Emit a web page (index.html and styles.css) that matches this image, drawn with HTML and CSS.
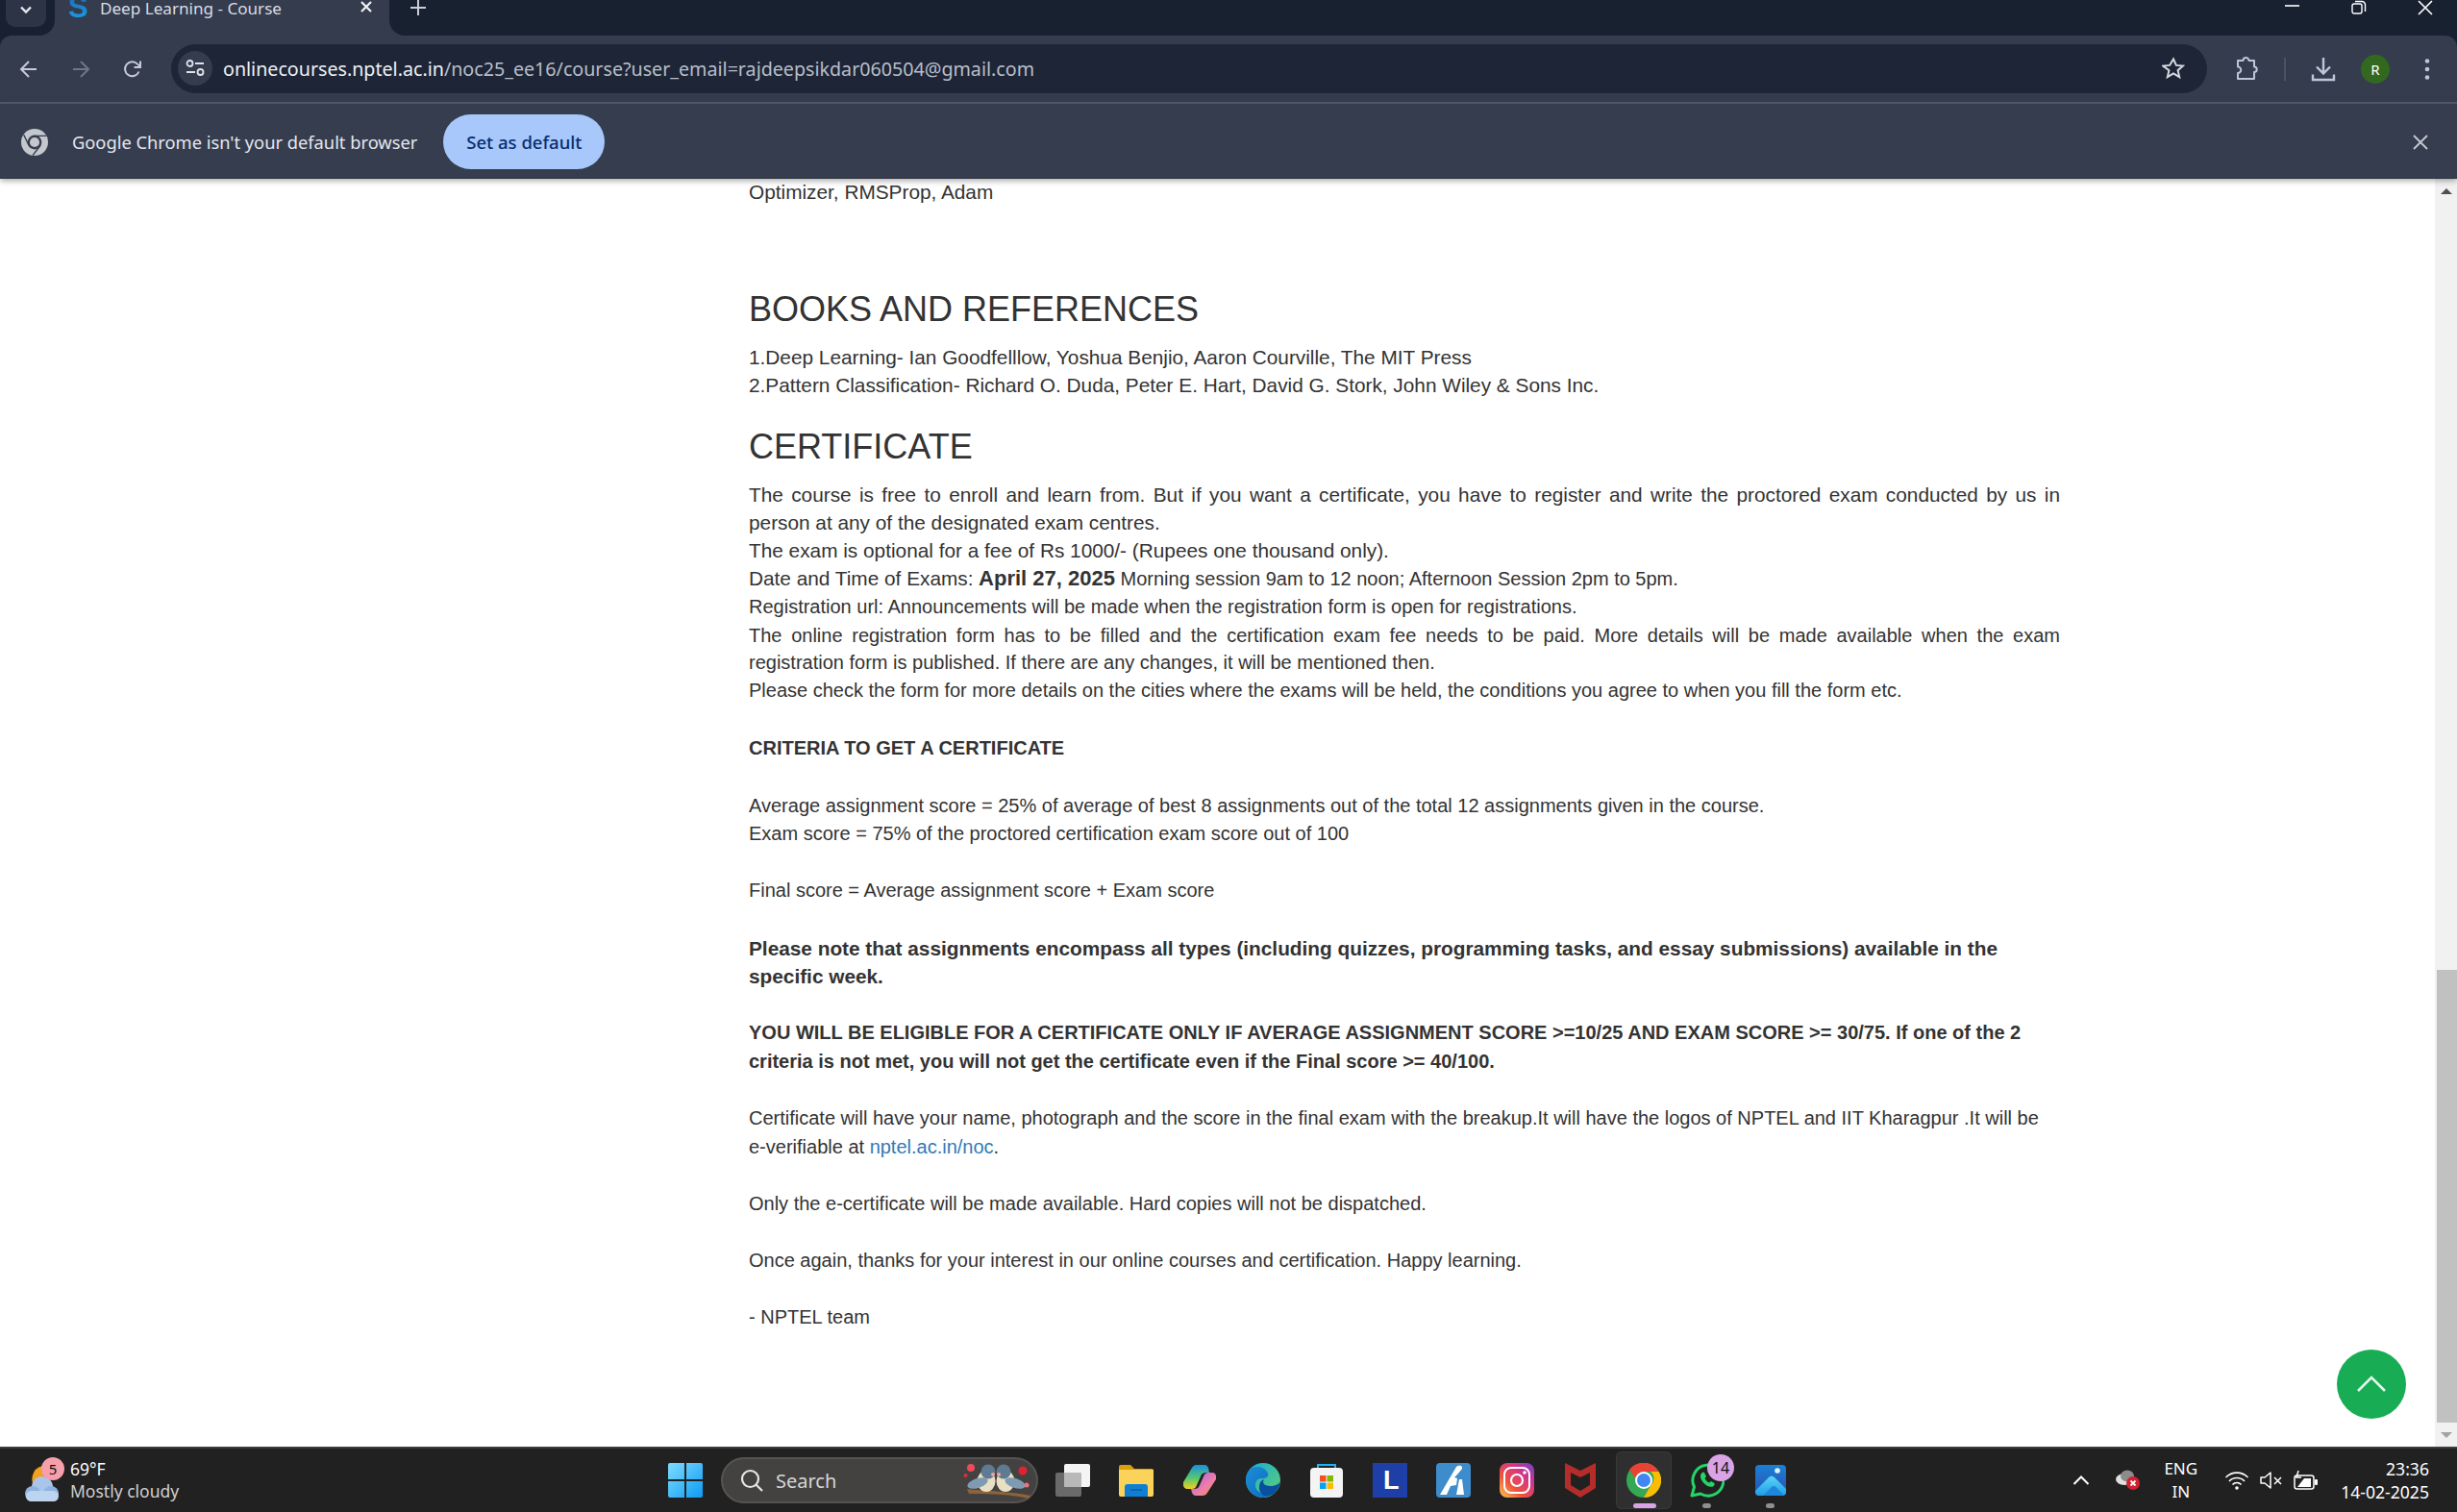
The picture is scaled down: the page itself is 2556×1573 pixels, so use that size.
FILE: index.html
```html
<!DOCTYPE html>
<html lang="en">
<head>
    <meta charset="UTF-8">
    <meta name="viewport" content="width=device-width, initial-scale=1.0">
    <title>Deep Learning - Course</title>
    <link rel="stylesheet" href="styles.css">
</head>
<body>
<div class="shell">

    <!-- tab strip -->
    <div class="tabstrip">
        <div class="strip-left">
            <div class="tab-search">
                <svg width="16" height="10" viewBox="0 0 16 10"><path d="M3 1.500l5 5 5-5" fill="none" stroke="#e6e9ef" stroke-width="2.400"/></svg>
            </div>
        </div>
        <div class="tab">
            <svg class="favicon" width="20" height="26" viewBox="0 0 20 26">
                <defs><linearGradient id="favS" x1="0" y1="0" x2="0" y2="1"><stop offset="0" stop-color="#1b5fb5"/><stop offset="1" stop-color="#19a7e8"/></linearGradient></defs>
                <text x="-1" y="20" font-family="Liberation Sans" font-weight="700" font-size="31" fill="url(#favS)">S</text>
            </svg>
            <span class="tab-title">Deep Learning - Course</span>
            <svg class="tab-close" width="14" height="14" viewBox="0 0 14 14"><path d="M2 2l10 10M12 2L2 12" stroke="#f0f2f5" stroke-width="2.200"/></svg>
        </div>
        <div class="strip-right">
            <svg class="new-tab" width="16" height="16" viewBox="0 0 16 16"><path d="M8 0v16M0 8h16" stroke="#c9ced8" stroke-width="2"/></svg>
            <div class="window-controls">
                <svg width="16" height="12" viewBox="0 0 16 12"><path d="M0 6h15" stroke="#fff" stroke-width="1.600"/></svg>
                <svg width="16" height="16" viewBox="0 0 16 16"><rect x="1" y="4" width="10" height="10" rx="2" fill="none" stroke="#fff" stroke-width="1.400"/><path d="M4 1.500h7a3.500 3.500 0 0 1 3.500 3.500v7" fill="none" stroke="#fff" stroke-width="1.400"/></svg>
                <svg width="16" height="16" viewBox="0 0 16 16"><path d="M1 1l14 14M15 1L1 15" stroke="#fff" stroke-width="1.600"/></svg>
            </div>
        </div>
    </div>

    <!-- toolbar -->
    <div class="toolbar">
        <div class="nav-slot">
            <svg width="20" height="20" viewBox="0 0 20 20"><path d="M18 10H3M10 2l-8 8 8 8" fill="none" stroke="#c5cad6" stroke-width="2"/></svg>
        </div>
        <div class="nav-slot">
            <svg width="20" height="20" viewBox="0 0 20 20"><path d="M2 10h15M10 2l8 8-8 8" fill="none" stroke="#6f7686" stroke-width="2"/></svg>
        </div>
        <div class="nav-slot">
            <svg width="20" height="20" viewBox="0 0 20 20"><path d="M16.500 12.500A7.500 7.500 0 1 1 15 4.600L17.500 7" fill="none" stroke="#c5cad6" stroke-width="2"/><path d="M18 1.500V8h-6.500" fill="none" stroke="#c5cad6" stroke-width="2"/></svg>
        </div>
        <div class="omnibox">
            <div class="site-chip">
                <svg width="20" height="18" viewBox="0 0 20 18"><circle cx="4.500" cy="4" r="3" fill="none" stroke="#dfe3ea" stroke-width="1.800"/><path d="M10 4h9M1 13h9" stroke="#dfe3ea" stroke-width="1.800"/><circle cx="15.500" cy="13" r="3" fill="none" stroke="#dfe3ea" stroke-width="1.800"/></svg>
            </div>
            <div class="url"><span class="url-host">onlinecourses.nptel.ac.in</span>/noc25_ee16/course?user_email=rajdeepsikdar060504@gmail.com</div>
            <svg class="star" width="24" height="24" viewBox="0 0 24 24"><path d="M12 2.500l2.900 6.400 7 .7-5.300 4.600 1.600 6.900-6.200-3.600-6.200 3.600 1.600-6.900L1.100 9.600l7-.7z" fill="none" stroke="#d5d9e2" stroke-width="2"/></svg>
        </div>
        <div class="tool-slot tool-first">
            <svg width="26" height="26" viewBox="0 0 26 26"><path d="M4 4h5.500a3 3 0 0 1 6 0H21v6.500a2.700 2.700 0 0 1 0 5.500v7H4v-6a3.200 3.200 0 0 0 0-6.500z" fill="none" stroke="#bcc6da" stroke-width="2" stroke-linejoin="round"/></svg>
        </div>
        <div class="tool-divider"></div>
        <div class="tool-slot">
            <svg width="26" height="26" viewBox="0 0 26 26"><path d="M13 1v16M6 10.500l7 7 7-7" fill="none" stroke="#bcc6da" stroke-width="2.400"/><path d="M2 18.500V24h22v-5.500" fill="none" stroke="#bcc6da" stroke-width="2.400"/></svg>
        </div>
        <div class="tool-slot">
            <div class="avatar">R</div>
        </div>
        <div class="tool-slot">
            <svg width="6" height="24" viewBox="0 0 6 24"><circle cx="3" cy="3.500" r="2.300" fill="#bcc6da"/><circle cx="3" cy="12" r="2.300" fill="#bcc6da"/><circle cx="3" cy="20.500" r="2.300" fill="#bcc6da"/></svg>
        </div>
    </div>

    <!-- default browser bar -->
    <div class="infobar">
        <svg width="28" height="28" viewBox="0 0 36 36">
            <circle cx="18" cy="18" r="18" fill="#c4c7cd"/>
            <path d="M18 9.500h15.600M10.500 22.500L3.500 8M25.500 22.500L15.500 35.500" stroke="#353d4f" stroke-width="1.800"/>
            <circle cx="18" cy="18" r="9.500" fill="#353d4f"/>
            <circle cx="18" cy="18" r="6.500" fill="#c4c7cd"/>
        </svg>
        <span class="infobar-text">Google Chrome isn't your default browser</span>
        <button class="set-default">Set as default</button>
        <svg class="infobar-close" width="16" height="16" viewBox="0 0 16 16"><path d="M1 1l14 14M15 1L1 15" stroke="#c5c9d2" stroke-width="1.800"/></svg>
    </div>

    <!-- page -->
    <div class="viewport">
        <div class="page">
            <div class="content">
                <p class="large">Optimizer, RMSProp, Adam</p>

                <h3 class="books-title">BOOKS AND REFERENCES</h3>
                <p class="large">1.Deep Learning- Ian Goodfelllow, Yoshua Benjio, Aaron Courville, The MIT Press<br>
                2.Pattern Classification- Richard O. Duda, Peter E. Hart, David G. Stork, John Wiley &amp; Sons Inc.</p>

                <h3 class="cert-title">CERTIFICATE</h3>
                <p class="large justified">The course is free to enroll and learn from. But if you want a certificate, you have to register and write the proctored exam conducted by us in person at any of the designated exam centres.</p>
                <p class="large">The exam is optional for a fee of Rs 1000/- (Rupees one thousand only).</p>
                <p><span class="large">Date and Time of Exams:</span> <strong class="exam-date">April 27, 2025</strong> Morning session 9am to 12 noon; Afternoon Session 2pm to 5pm.</p>
                <p class="reg-line">Registration url: Announcements will be made when the registration form is open for registrations.</p>
                <p class="justified">The online registration form has to be filled and the certification exam fee needs to be paid. More details will be made available when the exam registration form is published. If there are any changes, it will be mentioned then.</p>
                <p>Please check the form for more details on the cities where the exams will be held, the conditions you agree to when you fill the form etc.</p>

                <div class="criteria">
                    <p><strong>CRITERIA TO GET A CERTIFICATE</strong></p>
                    <p>Average assignment score = 25% of average of best 8 assignments out of the total 12 assignments given in the course.<br>
                    Exam score = 75% of the proctored certification exam score out of 100</p>
                    <p>Final score = Average assignment score + Exam score</p>
                    <p class="large-bold"><strong>Please note that assignments encompass all types (including quizzes, programming tasks, and essay submissions) available in the specific week.</strong></p>
                    <p><strong>YOU WILL BE ELIGIBLE FOR A CERTIFICATE ONLY IF AVERAGE ASSIGNMENT SCORE &gt;=10/25 AND EXAM SCORE &gt;= 30/75. If one of the 2 criteria is not met, you will not get the certificate even if the Final score &gt;= 40/100.</strong></p>
                    <p>Certificate will have your name, photograph and the score in the final exam with the breakup.It will have the logos of NPTEL and IIT Kharagpur .It will be e-verifiable at <a href="#">nptel.ac.in/noc</a>.</p>
                    <p>Only the e-certificate will be made available. Hard copies will not be dispatched.</p>
                    <p>Once again, thanks for your interest in our online courses and certification. Happy learning.</p>
                    <p>- NPTEL team</p>
                </div>
            </div>
        </div>
        <div class="scrollbar">
            <div class="scroll-arrow arrow-up"></div>
            <div class="scroll-track"><div class="scroll-thumb"></div></div>
            <div class="scroll-arrow arrow-down"></div>
        </div>
        <div class="back-to-top">
            <svg width="32" height="20" viewBox="0 0 32 20"><path d="M2 17L16 3l14 14" fill="none" stroke="#e8f7ee" stroke-width="2.600"/></svg>
        </div>
    </div>

    <!-- taskbar -->
    <div class="taskbar">
        <div class="task-left">
            <div class="weather-icon">
                <svg width="42" height="44" viewBox="0 0 42 44">
                    <path d="M20 4a14 14 0 0 0-6 24l14-8A14 14 0 0 1 20 4z" fill="#f2a01e"/>
                    <circle cx="20" cy="26" r="11" fill="#a9c6ea"/>
                    <circle cx="10" cy="33" r="8" fill="#8fb3e0"/>
                    <circle cx="29" cy="33" r="8" fill="#8fb3e0"/>
                    <rect x="3" y="30" width="34" height="11" rx="5.500" fill="#bcd4f0"/>
                </svg>
                <span class="weather-badge">5</span>
            </div>
            <div class="weather-text">
                <div class="weather-temp">69°F</div>
                <div class="weather-desc">Mostly cloudy</div>
            </div>
        </div>

        <div class="task-center">
            <div class="start-btn">
                <svg width="36" height="36" viewBox="0 0 36 36">
                    <defs><linearGradient id="winG" x1="0" y1="0" x2="1" y2="1"><stop offset="0" stop-color="#7fdcff"/><stop offset="1" stop-color="#0c9bf2"/></linearGradient></defs>
                    <path d="M2 0h15v17H0V2a2 2 0 0 1 2-2zM19 0h15a2 2 0 0 1 2 2v15H19zM0 19h17v17H2a2 2 0 0 1-2-2zM19 19h17v15a2 2 0 0 1-2 2H19z" fill="url(#winG)"/>
                </svg>
            </div>
            <div class="search-box">
                <svg width="24" height="24" viewBox="0 0 24 24"><circle cx="10.500" cy="10.500" r="8.500" fill="none" stroke="#e6e6e6" stroke-width="2.200"/><path d="M16.500 16.500L23 23" stroke="#e6e6e6" stroke-width="2.200"/></svg>
                <span class="search-label">Search</span>
                <svg class="search-art" width="72" height="38" viewBox="0 0 72 38">
                    <path d="M4 28c14 2 40 2 66 7l-2 3C48 33 20 33 6 33z" fill="#8f6339"/>
                    <ellipse cx="24" cy="20" rx="9.500" ry="11" fill="#e9e0c4"/>
                    <circle cx="26" cy="10" r="7.500" fill="#5e7b93"/>
                    <ellipse cx="15" cy="22" rx="11" ry="5" fill="#7f9bb2" transform="rotate(-18 15 22)"/>
                    <ellipse cx="44" cy="20" rx="9.500" ry="11" fill="#e9e0c4"/>
                    <circle cx="42" cy="10" r="7.500" fill="#5e7b93"/>
                    <ellipse cx="54" cy="22" rx="11" ry="5" fill="#7f9bb2" transform="rotate(18 54 22)"/>
                    <circle cx="31" cy="13" r="2" fill="#f0a5a0"/><circle cx="37" cy="13" r="2" fill="#f0a5a0"/>
                    <circle cx="8" cy="6" r="4" fill="#ee4b5a"/><circle cx="2.500" cy="14" r="2" fill="#d92f3d"/>
                    <circle cx="62" cy="9" r="4.500" fill="#e3222f"/><circle cx="66" cy="24" r="2.500" fill="#f0717c"/>
                </svg>
            </div>
            <div class="task-app">
                <svg width="36" height="34" viewBox="0 0 36 34"><rect x="0" y="9" width="27" height="25" rx="2" fill="#6a6a6a"/><rect x="9" y="0" width="27" height="24" rx="2" fill="#f4f4f4"/><rect x="9" y="9" width="18" height="15" rx="1" fill="#b9b9b9"/></svg>
            </div>
            <div class="task-app">
                <svg width="36" height="34" viewBox="0 0 36 34"><path d="M0 3a2 2 0 0 1 2-2h10l4 4h18a2 2 0 0 1 2 2v5H0z" fill="#d9a107"/><path d="M0 6h36v26a2 2 0 0 1-2 2H2a2 2 0 0 1-2-2z" fill="#fbd35b"/><path d="M6 24a3 3 0 0 1 3-3h18a3 3 0 0 1 3 3v10H6z" fill="#0f7fd3"/><path d="M12 27h12" stroke="#0a5ea3" stroke-width="1.500"/></svg>
            </div>
            <div class="task-app">
                <svg width="34" height="32" viewBox="0 0 34 32">
                    <defs>
                        <linearGradient id="copA" x1="0" y1="0" x2="0" y2="1"><stop offset="0" stop-color="#1c8fe0"/><stop offset=".55" stop-color="#55c96c"/><stop offset="1" stop-color="#f5d020"/></linearGradient>
                        <linearGradient id="copB" x1="0" y1="0" x2="1" y2="1"><stop offset="0" stop-color="#a05ce8"/><stop offset=".6" stop-color="#ef7fa8"/><stop offset="1" stop-color="#f68a3c"/></linearGradient>
                    </defs>
                    <path d="M9 3c1-2 3-3 5-3h8c2 0 3 1 4 3l1 5h-3c-3 0-5 1-6 4l-4 9c-1 3-3 4-5 4H4c-3 0-5-3-4-7z" fill="url(#copA)"/>
                    <path d="M25 29c-1 2-3 3-5 3h-7c-2 0-3-1-4-3l-1-4h3c3 0 5-1 6-4l4-9c1-3 3-4 5-4h4c3 0 5 3 4 7z" fill="url(#copB)"/>
                </svg>
            </div>
            <div class="task-app">
                <svg width="36" height="36" viewBox="0 0 36 36">
                    <defs>
                        <linearGradient id="edgeA" x1="0" y1="0" x2="1" y2="1"><stop offset="0" stop-color="#1aa8dc"/><stop offset="1" stop-color="#5fd36a"/></linearGradient>
                        <linearGradient id="edgeB" x1="0" y1="0" x2="1" y2="1"><stop offset="0" stop-color="#1a8fd8"/><stop offset="1" stop-color="#0d6ac0"/></linearGradient>
                    </defs>
                    <circle cx="18" cy="18" r="18" fill="url(#edgeA)"/>
                    <path d="M18 36A18 18 0 0 1 4 7c5-5 16-4 19 4 1 3-2 5-6 5-5 0-7 3-7 7 0 7 7 9 15 11-2 1-5 2-7 2z" fill="url(#edgeB)"/>
                    <path d="M26 24c3 0 9-2 10-5-1 7-5 14-11 15-6 2-12-3-11-10 0-3 2-6 5-7-2 3-1 7 7 7z" fill="#0a4f9e"/>
                </svg>
            </div>
            <div class="task-app">
                <svg width="36" height="36" viewBox="0 0 36 36"><path d="M9 6V2h18v4" fill="none" stroke="#1fb4f0" stroke-width="2"/><rect x="1" y="5" width="34" height="31" rx="4" fill="#f4f4f4"/><rect x="11" y="13" width="6.500" height="6.500" fill="#f25022"/><rect x="18.500" y="13" width="6.500" height="6.500" fill="#7fba00"/><rect x="11" y="20.500" width="6.500" height="6.500" fill="#00a4ef"/><rect x="18.500" y="20.500" width="6.500" height="6.500" fill="#ffb900"/></svg>
            </div>
            <div class="task-app">
                <svg width="36" height="36" viewBox="0 0 36 36"><rect width="36" height="36" fill="#1e3fa8"/><text x="11" y="27" font-family="Liberation Sans" font-weight="700" font-size="27" fill="#fff">L</text></svg>
            </div>
            <div class="task-app">
                <svg width="36" height="36" viewBox="0 0 36 36"><rect width="36" height="36" rx="4" fill="#3e8ccb"/><path d="M4 33L21 4c2-2 7-2 6 2l-5 6-3 3 3 1-1 7-6 1-4 9zM24 17l3 0 2 16h-8z" fill="#fff"/></svg>
            </div>
            <div class="task-app">
                <svg width="36" height="36" viewBox="0 0 36 36">
                    <defs><linearGradient id="igG" x1="0" y1="1" x2="1" y2="0"><stop offset="0" stop-color="#fdc74d"/><stop offset=".35" stop-color="#f0513f"/><stop offset=".7" stop-color="#d0348f"/><stop offset="1" stop-color="#6b44c8"/></linearGradient></defs>
                    <rect width="36" height="36" rx="8" fill="url(#igG)"/>
                    <rect x="5" y="5" width="26" height="26" rx="7" fill="none" stroke="#fff" stroke-width="2"/>
                    <circle cx="18" cy="18" r="6" fill="none" stroke="#fff" stroke-width="2.200"/>
                    <circle cx="26" cy="10" r="1.800" fill="#fff"/>
                </svg>
            </div>
            <div class="task-app">
                <svg width="32" height="36" viewBox="0 0 32 36"><path d="M0 0l16 8 16-8v26l-16 10L0 26zM6 10v13l10 6 10-6V10l-10 5z" fill="#b52d2a" fill-rule="evenodd"/></svg>
            </div>
            <div class="task-app task-active">
                <svg width="36" height="36" viewBox="0 0 36 36">
                    <circle cx="18" cy="18" r="18" fill="#34a853"/>
                    <path d="M18 0a18 18 0 0 1 15.600 9H18a9 9 0 0 0-8.800 7L3 7a18 18 0 0 1 15-7z" fill="#ea4335"/>
                    <path d="M33.600 9A18 18 0 0 1 18 36l7.800-13.500A9 9 0 0 0 25 9z" fill="#fbbc04"/>
                    <circle cx="18" cy="18" r="9" fill="#fff"/>
                    <circle cx="18" cy="18" r="7" fill="#4285f4"/>
                </svg>
                <span class="run-pill"></span>
            </div>
            <div class="task-app">
                <svg width="36" height="36" viewBox="0 0 36 36"><path d="M2 34l2.500-9A16 16 0 1 1 11 32z" fill="none" stroke="#25d366" stroke-width="3" stroke-linejoin="round"/><path d="M12 11c-2 2-1 6 2 9.500s7 5 10 4c1.500-.7 2-2.500 1.500-3.500l-3.500-2-2 1.500c-2-1-3.500-2.500-4.500-4.500L17 14l-2-4c-1.500-.5-2.500 0-3 1z" fill="#25d366"/></svg>
                <span class="app-badge">14</span>
                <span class="run-dot"></span>
            </div>
            <div class="task-app">
                <svg width="32" height="32" viewBox="0 0 32 32">
                    <defs>
                        <linearGradient id="phB" x1="0" y1="0" x2="0" y2="1"><stop offset="0" stop-color="#1b7fd6"/><stop offset="1" stop-color="#2a4fb0"/></linearGradient>
                        <linearGradient id="phM" x1="0" y1="0" x2="0" y2="1"><stop offset="0" stop-color="#5fd4f6"/><stop offset="1" stop-color="#1c9ee8"/></linearGradient>
                    </defs>
                    <rect width="32" height="32" rx="4" fill="url(#phB)"/>
                    <circle cx="23" cy="6" r="2.800" fill="#dff2fb"/>
                    <path d="M0 27L14 13c2-2 4-2 6 0l12 12v3a4 4 0 0 1-4 4H4a4 4 0 0 1-4-4z" fill="url(#phM)"/>
                    <path d="M8 32l9-9c1.500-1.500 3-1.500 4.500 0L30 32z" fill="#1e86dd"/>
                </svg>
                <span class="run-dot"></span>
            </div>
        </div>

        <div class="task-right">
            <svg class="tray-chevron" width="18" height="10" viewBox="0 0 18 10"><path d="M1.500 9L9 1.500 16.500 9" fill="none" stroke="#fff" stroke-width="2"/></svg>
            <svg class="tray-cloud" width="26" height="22" viewBox="0 0 26 22"><ellipse cx="9" cy="10" rx="9" ry="6" fill="#e0e0e0"/><ellipse cx="12" cy="6.500" rx="7" ry="6" fill="#8c8c8c"/><circle cx="18" cy="14" r="7" fill="#d32030"/><path d="M15.500 11.500l5 5M20.500 11.500l-5 5" stroke="#fff" stroke-width="1.800"/></svg>
            <div class="tray-lang">ENG<br>IN</div>
            <svg class="tray-icon" width="26" height="20" viewBox="0 0 26 20"><path d="M1.500 7a16 16 0 0 1 23 0M5 11a11 11 0 0 1 16 0M8.500 14.500a6 6 0 0 1 9 0" fill="none" stroke="#fff" stroke-width="1.600"/><circle cx="13" cy="18" r="1.800" fill="#fff"/></svg>
            <svg class="tray-icon" width="24" height="20" viewBox="0 0 24 20"><path d="M1 7v6h4l6 5V2L5 7z" fill="none" stroke="#fff" stroke-width="1.500" stroke-linejoin="round"/><path d="M15 7l7 7M22 7l-7 7" stroke="#fff" stroke-width="1.500"/></svg>
            <svg class="tray-icon" width="26" height="22" viewBox="0 0 26 22"><rect x="1" y="6" width="20" height="14" rx="2.500" fill="none" stroke="#fff" stroke-width="1.500"/><path d="M4 18l7-9h7v9z" fill="#fff"/><path d="M5 1L3 8h5" fill="none" stroke="#fff" stroke-width="1.500"/><rect x="22" y="10" width="3" height="6" rx="1" fill="#fff"/></svg>
            <div class="tray-clock">23:36<br>14-02-2025</div>
        </div>
    </div>
</div>
</body>
</html>
```

FILE: styles.css
```css
html, body {
    margin: 0;
    padding: 0;
    height: 100%;
    overflow: hidden;
}
body {
    background: #182130;
    font-family: "Liberation Sans", Arial, sans-serif;
}
.shell {
    height: 1573px;
    display: flex;
    flex-direction: column;
    overflow: hidden;
}

/* tab strip */
.tabstrip {
    height: 37px;
    flex: none;
    display: flex;
    background: #343c4e;
}
.strip-left {
    width: 57px;
    background: #182130;
    border-bottom-right-radius: 16px;
}
.tab-search {
    width: 42px;
    height: 28px;
    margin-left: 6px;
    background: #2c3445;
    border-radius: 0 0 10px 10px;
    display: flex;
    align-items: center;
    justify-content: center;
    padding-bottom: 6px;
    box-sizing: border-box;
}
.tab {
    width: 348px;
    display: flex;
    align-items: flex-start;
    padding: 0 0 0 15px;
    box-sizing: border-box;
    overflow: hidden;
}
.favicon {
    margin: -2px 12px 0 0;
    flex: none;
}
.tab-title {
    font-family: "Noto Sans", sans-serif;
    font-size: 17.1px;
    line-height: 18px;
    color: #d9dce3;
    white-space: nowrap;
}
.tab-close {
    margin: 0 0 0 auto;
    position: relative;
    top: 0;
    right: 17px;
}
.strip-right {
    flex: 1;
    background: #182130;
    border-bottom-left-radius: 16px;
    display: flex;
    align-items: flex-start;
}
.new-tab {
    margin: 0 0 0 22px;
}
.window-controls {
    margin-left: auto;
    padding-right: 25px;
    display: flex;
    gap: 53px;
}

/* toolbar */
.toolbar {
    height: 71px;
    flex: none;
    box-sizing: border-box;
    padding: 0 4px 0 3px;
    display: flex;
    align-items: center;
    background: #343c4e;
    border-bottom: 2px solid #565c6a;
    border-radius: 12px 12px 0 0;
}
.nav-slot {
    width: 54px;
    display: flex;
    justify-content: center;
    flex: none;
}
.omnibox {
    flex: 1;
    height: 51px;
    margin-left: 13px;
    margin-top: -1px;
    background: #1d2536;
    border-radius: 26px;
    display: flex;
    align-items: center;
    padding: 0 23px 0 7px;
    min-width: 0;
}
.site-chip {
    width: 36px;
    height: 36px;
    flex: none;
    border-radius: 50%;
    background: #343c4e;
    display: flex;
    align-items: center;
    justify-content: center;
}
.url {
    margin-left: 11px;
    font-family: "Noto Sans", sans-serif;
    font-size: 19.66px;
    color: #b9bec9;
    white-space: nowrap;
}
.url-host {
    color: #eef0f4;
}
.star {
    margin-left: auto;
}
.tool-first {
    margin-left: 14px;
}
.tool-slot {
    width: 54px;
    flex: none;
    display: flex;
    justify-content: center;
    align-items: center;
}
.tool-divider {
    width: 2px;
    height: 24px;
    margin: 0 12px;
    flex: none;
    background: #4a5263;
}
.avatar {
    width: 30px;
    height: 30px;
    border-radius: 50%;
    background: #33691e;
    color: #fff;
    font-family: "Noto Sans", sans-serif;
    font-size: 15px;
    line-height: 30px;
    text-align: center;
}

/* infobar */
.infobar {
    height: 78px;
    flex: none;
    box-sizing: border-box;
    padding: 2px 30px 0 22px;
    display: flex;
    align-items: center;
    background: #353d4f;
    border-bottom: 1px solid #2b3242;
    box-shadow: 0 2px 6px rgba(0, 0, 0, 0.35);
    position: relative;
    z-index: 2;
}
.infobar-text {
    margin-left: 25px;
    font-family: "Noto Sans", sans-serif;
    font-size: 18.3px;
    color: #e4e7ed;
    white-space: nowrap;
}
.set-default {
    margin-left: 27px;
    width: 168px;
    height: 57px;
    border: none;
    border-radius: 29px;
    background: #a8c7fa;
    color: #062e6f;
    font-family: "Noto Sans", sans-serif;
    font-size: 18.5px;
    font-weight: 500;
}
.infobar-close {
    margin-left: auto;
}

/* page */
.viewport {
    flex: 1;
    display: flex;
    position: relative;
    min-height: 0;
    background: #fff;
}
.page {
    flex: 1;
    overflow: hidden;
}
.content {
    width: 1364px;
    margin-left: 779px;
    margin-top: -1px;
    font-size: 20px;
    line-height: 28.6px;
    color: #333;
}
.content p {
    margin: 0;
}
.content a {
    color: #337ab7;
    text-decoration: none;
}
.content h3 {
    margin: 0;
    font-weight: 400;
    font-size: 36px;
    line-height: 40px;
    color: #333;
}
.large {
    font-size: 20.8px;
    line-height: 29px;
}
.books-title {
    padding-top: 88px;
    padding-bottom: 15px;
}
.cert-title {
    padding-top: 30px;
    padding-bottom: 15px;
}
.justified {
    text-align: justify;
}
.exam-date {
    font-size: 22px;
    line-height: 20px;
}
.content .reg-line {
    margin-bottom: 1.5px;
}
.criteria {
    margin-top: 32px;
    line-height: 29.6px;
}
.criteria p {
    margin-bottom: 29.6px;
}
.criteria .large-bold {
    font-size: 20.8px;
}

/* scrollbar */
.scrollbar {
    width: 23px;
    flex: none;
    display: flex;
    flex-direction: column;
    background: #f1f1f1;
}
.scroll-arrow {
    height: 25px;
    flex: none;
    display: flex;
    align-items: center;
    justify-content: center;
}
.arrow-up::before {
    content: "";
    border-left: 6px solid transparent;
    border-right: 6px solid transparent;
    border-bottom: 6px solid #505050;
}
.arrow-down::before {
    content: "";
    border-left: 6px solid transparent;
    border-right: 6px solid transparent;
    border-top: 6px solid #a3a3a3;
}
.scroll-track {
    flex: 1;
    display: flex;
    flex-direction: column;
    justify-content: flex-end;
}
.scroll-thumb {
    height: 471px;
    margin-left: 2px;
    background: #c1c1c1;
}
.back-to-top {
    position: absolute;
    right: 53px;
    bottom: 29px;
    width: 72px;
    height: 72px;
    border-radius: 50%;
    background: #18ad55;
    display: flex;
    align-items: center;
    justify-content: center;
}

/* taskbar */
.taskbar {
    height: 68px;
    flex: none;
    box-sizing: border-box;
    border-top: 2px solid #3e3e3e;
    background: #212121;
    display: grid;
    grid-template-columns: 1fr auto 1fr;
    align-items: center;
    font-family: "Noto Sans", sans-serif;
    color: #fff;
}
.task-left {
    display: flex;
    align-items: center;
    padding-left: 24px;
}
.weather-icon {
    position: relative;
    width: 42px;
    height: 44px;
    margin-top: 6px;
}
.weather-badge {
    position: absolute;
    top: -5px;
    right: -1px;
    width: 24px;
    height: 24px;
    border-radius: 50%;
    background: #f7a0ac;
    color: #111;
    font-size: 15px;
    line-height: 24px;
    text-align: center;
}
.weather-text {
    margin-left: 7px;
    font-size: 17.5px;
    line-height: 23px;
}
.weather-desc {
    color: #cfcfcf;
}
.task-center {
    display: flex;
    align-items: center;
    height: 66px;
    padding-left: 14px;
}
.start-btn {
    width: 36px;
    display: flex;
    flex: none;
}
.search-box {
    width: 330px;
    height: 48px;
    margin: 0 3px 0 19px;
    box-sizing: border-box;
    padding: 0 4px 0 18px;
    border-radius: 24px;
    background: #434240;
    border: 2px solid #555452;
    display: flex;
    align-items: center;
}
.search-label {
    margin-left: 13px;
    font-size: 20px;
    color: #d6d6d6;
}
.search-art {
    margin-left: auto;
}
.task-app {
    width: 66px;
    height: 60px;
    flex: none;
    position: relative;
    display: flex;
    align-items: center;
    justify-content: center;
}
.task-active {
    width: 58px;
    margin: 0 4px;
    background: #2f2f2f;
    border-radius: 6px;
    box-shadow: inset 0 0 0 1px #383838;
}
.run-pill {
    position: absolute;
    bottom: 1px;
    left: 18px;
    width: 24px;
    height: 5px;
    border-radius: 3px;
    background: #d9a3e6;
}
.run-dot {
    position: absolute;
    bottom: 1px;
    left: 28px;
    width: 9px;
    height: 5px;
    border-radius: 3px;
    background: #8f8f8f;
}
.app-badge {
    position: absolute;
    top: 3px;
    right: 5px;
    width: 28px;
    height: 28px;
    border-radius: 50%;
    background: #d9a3e6;
    color: #111;
    font-size: 16px;
    line-height: 28px;
    text-align: center;
}
.task-right {
    display: flex;
    align-items: center;
    justify-content: flex-end;
    padding-right: 29px;
}
.tray-cloud {
    margin-left: 27px;
}
.tray-lang {
    margin-left: 24px;
    font-size: 17px;
    line-height: 24px;
    text-align: center;
}
.tray-icon {
    margin-left: 11px;
}
.tray-lang + .tray-icon {
    margin-left: 27.5px;
}
.tray-clock {
    margin-left: 23.5px;
    font-size: 17.6px;
    line-height: 24px;
    text-align: right;
}
```
